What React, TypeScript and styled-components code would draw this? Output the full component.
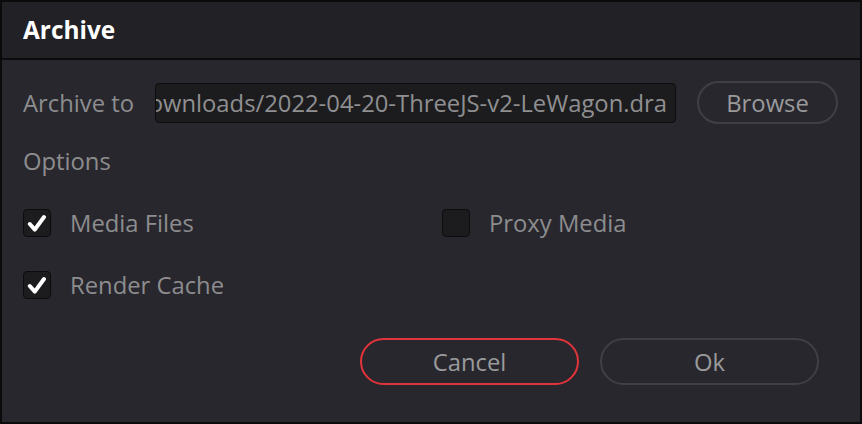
import React from 'react';
import styled, { createGlobalStyle } from 'styled-components';

const GlobalStyle = createGlobalStyle`
  html, body {
    margin: 0;
    padding: 0;
    background: #0b0b0c;
  }
  * {
    box-sizing: border-box;
  }
`;

const Dialog = styled.div`
  width: 862px;
  height: 424px;
  border: 2px solid #0b0b0c;
  background-color: #28272d;
  font-family: 'Open Sans', 'Noto Sans', sans-serif;
  display: flex;
  flex-direction: column;
`;

const TitleBar = styled.div`
  height: 58px;
  background-color: #222126;
  border-bottom: 2px solid #0c0c0d;
  display: flex;
  align-items: center;
  padding-left: 21px;
  padding-bottom: 1px;
  color: #ffffff;
  font-size: 24.4px;
  font-weight: 700;
`;

const Body = styled.div`
  flex: 1;
  padding: 21px 22px 0 21px;
  display: flex;
  flex-direction: column;
`;

const PathRow = styled.div`
  display: flex;
  align-items: center;
  height: 43px;
`;

const Label = styled.div`
  color: #8d8d8f;
  font-size: 23.8px;
  white-space: nowrap;
`;

const PathLabel = styled(Label)`
  width: 132px;
  flex-shrink: 0;
`;

const PathField = styled.div`
  width: 521px;
  height: 40px;
  background-color: #1c1c1e;
  border: 1px solid #0d0d0e;
  border-radius: 4px;
  display: flex;
  justify-content: flex-end;
  align-items: center;
  overflow: hidden;
  padding-right: 8px;
  color: #8f8f91;
  font-size: 23.8px;
  white-space: nowrap;
`;

const PillButton = styled.button<{ $danger?: boolean; $width: number; $height: number }>`
  width: ${({ $width }) => $width}px;
  height: ${({ $height }) => $height}px;
  border-radius: 999px;
  background: transparent;
  border: ${({ $danger }) => ($danger ? '2px solid #e3333b' : '2px solid #3f3f45')};
  color: #9a9a9c;
  font-family: inherit;
  font-size: 23.8px;
  padding: 0;
  cursor: pointer;
`;

const BrowseButton = styled(PillButton)`
  margin-left: 21px;
`;

const SectionTitle = styled(Label)`
  margin-top: 23px;
  height: 28px;
  line-height: 28px;
`;

const OptionGrid = styled.div`
  margin-top: 34px;
  display: grid;
  grid-template-columns: 419px 1fr;
  row-gap: 34px;
`;

const Option = styled.label`
  display: flex;
  align-items: center;
  height: 28px;
  gap: 19px;
  cursor: pointer;
`;

const Box = styled.span`
  width: 28px;
  height: 28px;
  border-radius: 4px;
  background-color: #1c1c1e;
  border: 1px solid #0c0c0d;
  display: flex;
  align-items: center;
  justify-content: center;
  flex-shrink: 0;
`;

const Footer = styled.div`
  margin-top: 39px;
  display: flex;
  justify-content: flex-end;
  gap: 21px;
  padding-right: 19px;
`;

const Check = () => (
  <svg width="20" height="19" viewBox="0 0 20 19">
    <path
      d="M2.8 10 L7.8 15.6 L17 3"
      fill="none"
      stroke="#ffffff"
      strokeWidth="4"
      strokeLinecap="round"
      strokeLinejoin="round"
    />
  </svg>
);

const CheckOption = ({ label, checked }: { label: string; checked: boolean }) => (
  <Option>
    <Box>{checked && <Check />}</Box>
    <Label>{label}</Label>
  </Option>
);

const App: React.FC = () => {
  return (
    <>
      <GlobalStyle />
      <Dialog>
        <TitleBar>Archive</TitleBar>
        <Body>
          <PathRow>
            <PathLabel>Archive to</PathLabel>
            <PathField>Downloads/2022-04-20-ThreeJS-v2-LeWagon.dra</PathField>
            <BrowseButton $width={141} $height={43}>Browse</BrowseButton>
          </PathRow>
          <SectionTitle>Options</SectionTitle>
          <OptionGrid>
            <CheckOption label="Media Files" checked />
            <CheckOption label="Proxy Media" checked={false} />
            <CheckOption label="Render Cache" checked />
          </OptionGrid>
          <Footer>
            <PillButton $danger $width={219} $height={47}>Cancel</PillButton>
            <PillButton $width={219} $height={47}>Ok</PillButton>
          </Footer>
        </Body>
      </Dialog>
    </>
  );
};

export default App;
